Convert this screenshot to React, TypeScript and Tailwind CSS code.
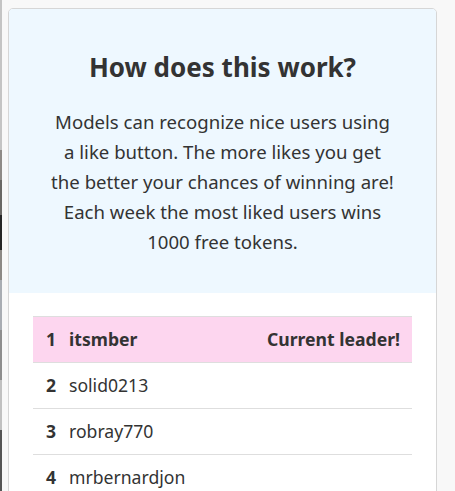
const rows = [
  {rank: 1, name: 'itsmber', leader: true},
  {rank: 2, name: 'solid0213', leader: false},
  {rank: 3, name: 'robray770', leader: false},
  {rank: 4, name: 'mrbernardjon', leader: false},
];

export default function App() {
  return (
    <div className="flex h-[491px] w-[455px] overflow-hidden bg-[#f8f8f8] font-['Noto_Sans',sans-serif] text-[#333]">
      {/* sliver of the page behind the modal */}
      <div className="flex w-[2px] flex-col">
        <div className="h-[150px] bg-[#c4c4c4]" />
        <div className="h-[30px] bg-[#8f8a86]" />
        <div className="h-[35px] bg-[#6a6764]" />
        <div className="h-[35px] bg-[#262626]" />
        <div className="h-[30px] bg-[#8c8884]" />
        <div className="h-[50px] bg-[#a9adb3]" />
        <div className="h-[50px] bg-[#8e8e8e]" />
        <div className="h-[50px] bg-[#c0c0c0]" />
        <div className="flex-1 bg-[#555]" />
      </div>
      <div className="w-[6px]" />

      <div className="mt-[8px] flex h-[490px] w-[429px] flex-col overflow-hidden rounded-[5px] border border-[#d6d6d6] bg-white">
        <div className="bg-[#eef8ff] px-4 pb-[36px] pt-[43px] text-center">
          <h2 className="mb-[25px] text-[26px] font-bold leading-[30px]">How does this work?</h2>
          <p className="text-[18.6px] leading-[30px]">
            Models can recognize nice users using
            <br />
            a like button. The more likes you get
            <br />
            the better your chances of winning are!
            <br />
            Each week the most liked users wins
            <br />
            1000 free tokens.
          </p>
        </div>

        <div className="px-6 pt-[23px]">
          <div className="border-t border-[#dedede]">
            {rows.map((row) => (
              <div
                key={row.rank}
                className={`flex h-[46px] items-center border-b border-[#dedede] pl-[13px] pr-[12px] text-[17.6px] ${
                  row.leader ? 'bg-[#fdd6ef] font-bold' : ''
                }`}
              >
                <span className="w-[23px] font-bold">{row.rank}</span>
                <span className="flex-1">{row.name}</span>
                {row.leader && <span>Current leader!</span>}
              </div>
            ))}
          </div>
        </div>
      </div>
    </div>
  );
}
